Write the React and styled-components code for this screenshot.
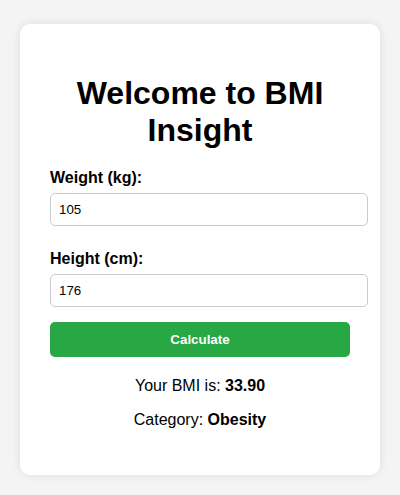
import React, { useState } from "react";
import styled, { createGlobalStyle } from "styled-components";

const GlobalStyle = createGlobalStyle`
  html, body {
    margin: 0;
    padding: 0;
    background: #f4f4f4;
    font-family: "Liberation Sans", Arial, sans-serif;
  }
`;

const Page = styled.div`
  display: flex;
  justify-content: center;
  padding-top: 24px;
  min-height: 100vh;
  box-sizing: border-box;
`;

const Card = styled.div`
  width: 300px;
  padding: 30px;
  background: #ffffff;
  border-radius: 10px;
  box-shadow: 0 0 10px rgba(0, 0, 0, 0.1);
  align-self: flex-start;
`;

const Title = styled.h1`
  margin: 21px 0 20px;
  font-size: 32px;
  font-weight: bold;
  text-align: center;
  color: #000;
`;

const Field = styled.div`
  margin-bottom: ${(p) => p.$gap}px;
`;

const Label = styled.label`
  display: block;
  margin-bottom: 6px;
  font-size: 16px;
  font-weight: bold;
  color: #000;
`;

const Input = styled.input`
  display: block;
  width: 100%;
  margin: 0;
  padding: 8px;
  border: 1px solid #ccc;
  border-radius: 5px;
  font-family: "Liberation Sans", Arial, sans-serif;
  font-size: 13.333px;
  color: #000;
  background: #fff;
  outline: none;
`;

const Button = styled.button`
  display: block;
  width: 100%;
  padding: 10px;
  border: none;
  border-radius: 5px;
  background: #28a745;
  color: #fff;
  font-family: "Liberation Sans", Arial, sans-serif;
  font-size: 13.333px;
  font-weight: bold;
  cursor: pointer;
`;

const Result = styled.div`
  margin-top: 20px;
  text-align: center;
`;

const Line = styled.p`
  margin: 16px 0;
  font-size: 16px;
  color: #000;
`;

export default function App() {
  const [weight, setWeight] = useState("105");
  const [height, setHeight] = useState("176");

  return (
    <>
      <GlobalStyle />
      <Page>
        <Card>
          <Title>Welcome to BMI Insight</Title>
          <Field $gap={24}>
            <Label htmlFor="weight">Weight (kg):</Label>
            <Input
              id="weight"
              type="text"
              value={weight}
              onChange={(e) => setWeight(e.target.value)}
            />
          </Field>
          <Field $gap={15}>
            <Label htmlFor="height">Height (cm):</Label>
            <Input
              id="height"
              type="text"
              value={height}
              onChange={(e) => setHeight(e.target.value)}
            />
          </Field>
          <Button type="button">Calculate</Button>
          <Result>
            <Line>
              Your BMI is: <strong>33.90</strong>
            </Line>
            <Line>
              Category: <strong>Obesity</strong>
            </Line>
          </Result>
        </Card>
      </Page>
    </>
  );
}
